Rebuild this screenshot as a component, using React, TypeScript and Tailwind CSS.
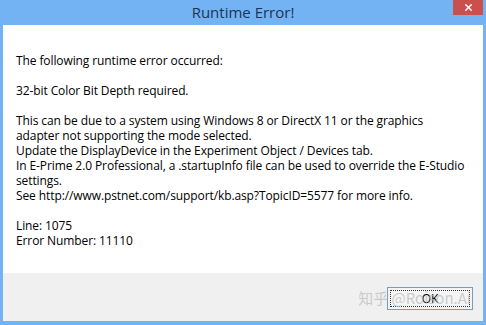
import { X } from "lucide-react";

const lines = [
  "This can be due to a system using Windows 8 or DirectX 11 or the graphics",
  "adapter not supporting the mode selected.",
  "Update the DisplayDevice in the Experiment Object / Devices tab.",
  "In E-Prime 2.0 Professional, a .startupInfo file can be used to override the E-Studio",
  "settings.",
  "See http://www.pstnet.com/support/kb.asp?TopicID=5577 for more info.",
];

export default function App() {
  return (
    <div
      className="flex h-[325px] w-[486px] flex-col bg-[#73b3f3] text-[12px] leading-[15px] text-black"
      style={{ fontFamily: '"Open Sans", "Noto Sans", sans-serif' }}
    >
      <div className="relative flex h-[25px] shrink-0 items-center justify-center">
        <span className="text-[15px] text-[#1b3454]">Runtime Error!</span>
        <div className="absolute right-[3px] top-0 flex h-[15px] w-[30px] items-center justify-center bg-[#c9504c]">
          <X size={11} strokeWidth={3} className="text-white" />
        </div>
      </div>
      <div className="mx-[3px] flex flex-1 flex-col">
        <div className="flex h-[248px] flex-col bg-white pl-[13px] pt-[28px] tracking-[-0.1px]">
          <p>The following runtime error occurred:</p>
          <p className="mt-[15px]">32-bit Color Bit Depth required.</p>
          <div className="mt-[15px]">
            {lines.map((l) => (
              <p key={l}>{l}</p>
            ))}
          </div>
          <p className="mt-[15px]">Line: 1075</p>
          <p>Error Number: 11110</p>
        </div>
        <div className="relative flex h-[48px] justify-end bg-[#f0f0f0] pr-[10px] pt-[14px]">
          <button
            type="button"
            className="flex h-[23px] w-[86px] items-center justify-center border border-[#7a9cb8] bg-[#f4f4f4] p-[2px]"
          >
            <span className="flex h-full w-full items-center justify-center border border-dotted border-[#333]">
              OK
            </span>
          </button>
          <span
            className="pointer-events-none absolute right-[12px] top-[17px] text-[15px] text-[#b8b8b8]/70"
            style={{ fontFamily: '"Noto Sans CJK SC", sans-serif' }}
          >
            知乎 @Roison.Ai
          </span>
        </div>
      </div>
      <div className="h-[4px] shrink-0" />
    </div>
  );
}
